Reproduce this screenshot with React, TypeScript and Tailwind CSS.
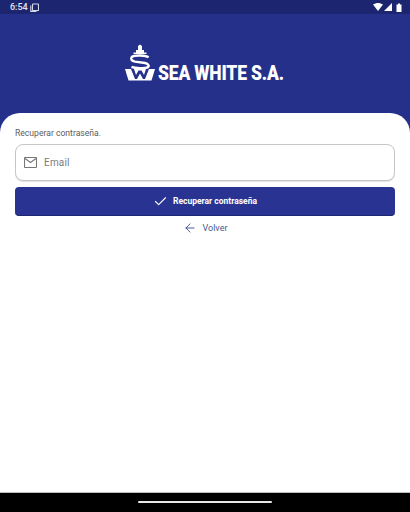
import { ArrowLeft, Check } from "lucide-react";

function StatusBar() {
  return (
    <div className="flex h-[14px] items-center justify-between bg-[#1c2670] pl-[10px] pr-[7px] text-white">
      <div className="flex items-center gap-[2px]">
        <span className="text-[9px] leading-none font-medium text-[#e4e6f0] [font-family:Roboto,sans-serif]">6:54</span>
        <svg width="9" height="9" viewBox="0 0 9 9" fill="none" stroke="#d5d8e6" strokeWidth="1.1">
          <rect x="2.5" y="1" width="6" height="6.5" rx="0.5" />
          <path d="M0.8 2.5V8.4H6.5" />
        </svg>
      </div>
      <div className="flex items-center gap-[1px]">
        <svg width="10" height="8" viewBox="0 0 10 8" fill="white">
          <path d="M0 1.6C3 -0.5 7 -0.5 10 1.6L5 8Z" />
        </svg>
        <svg width="8" height="8" viewBox="0 0 8 8" fill="white">
          <path d="M8 0V8H0Z" />
        </svg>
        <svg width="8" height="9" viewBox="0 0 8 9" fill="white" className="ml-[2px]">
          <path d="M1.5 1.4H3V0.4H5V1.4H6.5V9H1.5Z" />
        </svg>
      </div>
    </div>
  );
}

function Emblem() {
  return (
    <svg width="30" height="37" viewBox="0 0 30 37" fill="none">
      {/* mast and funnel */}
      <path d="M15 0.5L17 2V6H19V8.5H21.5V10H8.5V8.5H11V6H13V2Z" fill="white" />
      {/* S curve */}
      <path
        d="M23.5 13.5C21 11 9 11 6.8 13C5 15 6.6 17 10 17.6L20 19C23.6 19.8 24.6 22 22.6 23.4C20 24.6 10 24.4 6.5 22.8"
        stroke="white"
        strokeWidth="2.4"
      />
      {/* hull, the dark notches leave a W */}
      <path d="M0 25H30L26.5 36.5H3.5Z" fill="white" />
      <path d="M6 25H9L11 31L13.5 26.5H16.5L19 31L21 25H24L20 35H18L15 29.5L12 35H10Z" fill="#25308a" />
    </svg>
  );
}

export default function App() {
  return (
    <div className="flex h-[512px] w-[410px] flex-col overflow-hidden bg-[#25308a] [font-family:Roboto,sans-serif]">
      <StatusBar />

      <header className="flex h-[99px] items-start justify-center pt-[30px]">
        <div className="flex items-end gap-[3px]">
          <Emblem />
          <span className="w-[127px] origin-left scale-x-[0.875] text-[20px] leading-[16px] font-black tracking-[-0.2px] whitespace-nowrap text-white">
            SEA WHITE S.A.
          </span>
        </div>
      </header>

      <main className="flex flex-1 flex-col rounded-t-[20px] bg-white px-[15px] pt-[15px]">
        <p className="text-[8.6px] leading-[11px] text-[#5c5c5c]">Recuperar contraseña.</p>

        <label className="mt-[5px] flex h-[37px] items-center gap-[7px] rounded-[8px] border border-[#c6c6c6] bg-white pl-[8px] shadow-[0_1px_0_#e4e4e4]">
          <svg width="13" height="11" viewBox="0 0 13 11" fill="none" stroke="#777777" strokeWidth="1.1">
            <rect x="0.5" y="0.5" width="12" height="10" rx="0.8" />
            <path d="M1 1.5L6.5 5.5L12 1.5" />
          </svg>
          <span className="text-[10px] tracking-[0.2px] text-[#7b7b7b]">Email</span>
        </label>

        <button className="mt-[6px] flex h-[29px] items-center justify-center gap-[5px] rounded-[4px] border-b border-[#1c2670] bg-[#293392] text-white">
          <Check size={15} strokeWidth={1.7} />
          <span className="text-[8.5px] font-bold">Recuperar contraseña</span>
        </button>

        <a className="mt-[5px] flex items-center justify-center gap-[6px] text-[#34468c]">
          <ArrowLeft size={14} strokeWidth={1.5} />
          <span className="text-[9px] leading-[14px] text-[#4a5a8c]">Volver</span>
        </a>
      </main>

      <div className="flex h-[20px] items-start justify-center border-t border-[#bdbdbd] bg-black pt-[8px]">
        <div className="h-[2px] w-[134px] rounded-full bg-[#e8e8e8]" />
      </div>
    </div>
  );
}
